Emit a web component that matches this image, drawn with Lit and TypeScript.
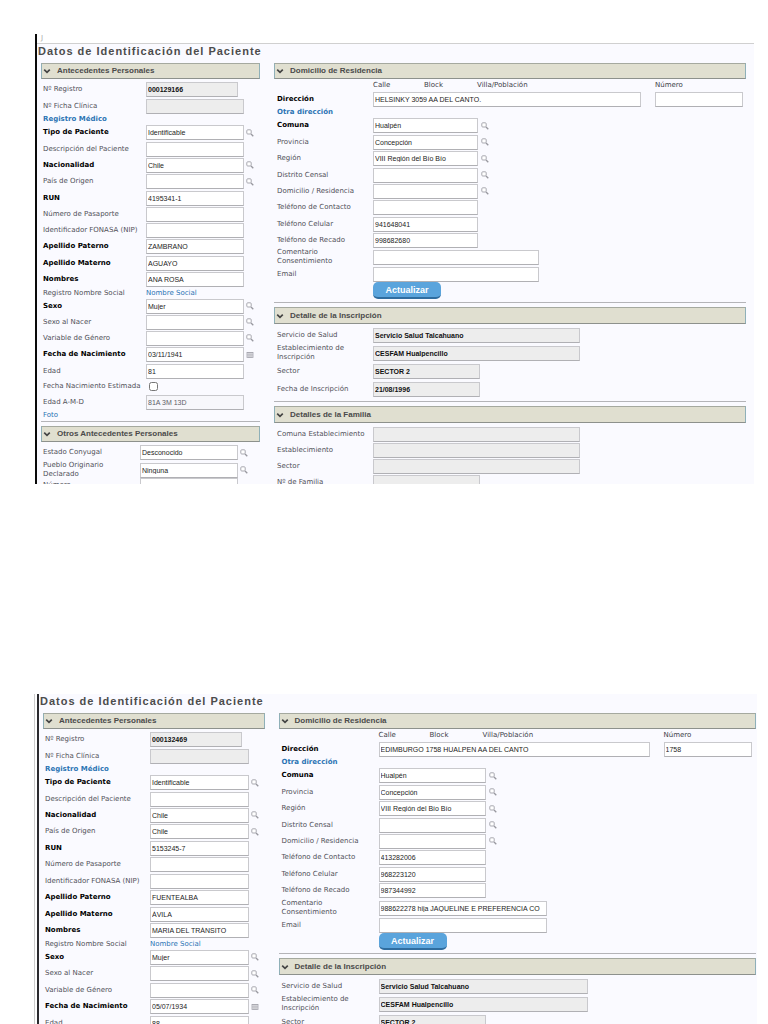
import { LitElement, html, css, svg, nothing } from "lit";
import { customElement, property } from "lit/decorators.js";
import { classMap } from "lit/directives/class-map.js";

type Row = {
  label: string;
  value?: string;
  kind?: "text" | "link" | "linkPair" | "check";
  bold?: boolean;
  icon?: "search" | "calendar";
  locked?: boolean;
  muted?: boolean;
  width?: "code" | "long" | "wide" | "mid";
  size?: string;
};

type Patient = {
  full: boolean;
  registro: string;
  origen: string;
  run: string;
  paterno: string;
  materno: string;
  nombres: string;
  nacimiento: string;
  edad: string;
  amd?: string;
  calle: string;
  numero: string;
  contacto: string;
  celular: string;
  recado: string;
  comentario: string;
};

const patients: Patient[] = [
  {
    full: true, registro: "000129166", origen: "", run: "4195341-1", paterno: "ZAMBRANO", materno: "AGUAYO",
    nombres: "ANA ROSA", nacimiento: "03/11/1941", edad: "81", amd: "81A 3M 13D",
    calle: "HELSINKY 3059 AA DEL CANTO.", numero: "", contacto: "", celular: "941648041",
    recado: "998682680", comentario: "",
  },
  {
    full: false, registro: "000132469", origen: "Chile", run: "5153245-7", paterno: "FUENTEALBA", materno: "ÁVILA",
    nombres: "MARIA DEL TRÁNSITO", nacimiento: "05/07/1934", edad: "88",
    calle: "EDIMBURGO 1758 HUALPEN AA DEL CANTO", numero: "1758", contacto: "413282006",
    celular: "968223120", recado: "987344992", comentario: "988622278 hija JAQUELINE E PREFERENCIA CO",
  },
];

const searchIcon = svg`<svg class="glyph" viewBox="0 0 8 8" aria-hidden="true">
  <rect x=".8" y=".8" width="4.4" height="4.2" rx="1" fill="#fff" stroke="#a8a8b0"/>
  <path d="M5 5 7.3 7.3" stroke="#98989f" stroke-width="1.3"/></svg>`;

const calendarIcon = svg`<svg class="glyph" viewBox="0 0 8 8" aria-hidden="true">
  <path d="M1 1.5h6" stroke="#96969e"/>
  <rect x="1" y="1.5" width="6" height="5" fill="#f4f4f8" stroke="#a4a4ac" stroke-width=".8"/>
  <path d="M1 3.2h6M1 4.9h6M3 2v5M5 2v5" stroke="#a4a4ac" stroke-width=".6"/></svg>`;

const chevron = svg`<svg class="chev" viewBox="0 0 8 8" aria-hidden="true">
  <path d="M1.2 2.6 4 5.3 6.8 2.6" fill="none" stroke="#444" stroke-width="1.7"/></svg>`;

const wrapping = ["Comentario Consentimiento", "Establecimiento de Inscripción", "Pueblo Originario Declarado"];

@customElement("patient-record")
class PatientRecord extends LitElement {
  @property({ attribute: false }) patient!: Patient;

  static styles = css`
    :host {
      display: block;
      background: #fafaff;
      color: #505058;
      font: 7px/9px "DejaVu Sans", Verdana, sans-serif;
    }
    .clip { height: 100%; overflow: hidden; }
    .scrap {
      height: 10px;
      border-bottom: 1px solid #d0d0d0;
      background: #fff;
      padding-left: 4px;
      color: #aaa;
      box-sizing: border-box;
    }
    h1 {
      margin: 0;
      padding-left: 1px;
      color: #4c4c4c;
      font: bold 11px/15px "Liberation Sans", Arial, sans-serif;
      letter-spacing: 1px;
      white-space: nowrap;
    }
    .columns {
      display: grid;
      grid-template-columns: 219fr 472fr;
      column-gap: 14px;
      margin: 4px var(--edge) 0 4px;
    }
    h2 {
      display: flex;
      align-items: center;
      gap: 6px;
      height: 16px;
      box-sizing: border-box;
      margin: 0;
      padding-left: 1px;
      border: 1px solid #a5a99f;
      border-left-color: #8fb0b8;
      border-right-color: #8fb0b8;
      border-bottom-color: #8d918c;
      background: #e0dfd0;
      color: #4a4a4a;
      font: bold 8px/14px "Liberation Sans", Arial, sans-serif;
      white-space: nowrap;
    }
    .chev { width: 8px; height: 8px; }
    .rows { padding: 2px 0 0 2px; }
    .row {
      display: grid;
      grid-template-columns: var(--label) minmax(0, 1fr);
      align-items: center;
      height: 16px;
    }
    .right { --label: var(--label-right); }
    .right .rows { padding-left: 3px; }
    .plus { height: 17px; }
    .less { height: 15px; }
    .pair { height: 10px; }
    .tall { height: 18px; }
    .label { display: block; }
    .one { white-space: nowrap; }
    .bold { color: #000; font-weight: bold; }
    .control { display: flex; align-items: center; gap: 2px; }
    .right .control { gap: 3px; }
    .right .address { gap: 14px; }
    input { margin: 0; box-sizing: border-box; }
    .box {
      width: var(--field);
      height: 15px;
      padding: 0 1px;
      border: 1px solid #c9c9cd;
      border-bottom-color: #b0b0b4;
      border-radius: 0;
      background: #fff;
      color: #1c1c22;
      font: 7px/12px "Liberation Sans", Arial, sans-serif;
    }
    .right .box { width: var(--field-right); }
    .box.locked { background: #ededed; color: #111; font-weight: bold; }
    .box.muted { background: #f7f7fb; color: #606068; }
    .box.code { width: 92px; }
    .right .box.long { width: var(--long); }
    .right .box.wide { width: var(--wide); }
    .right .box.mid { width: 107px; }
    .right .box.street { width: var(--street); }
    .right .box.number { width: 88px; }
    .tick { width: 9px; height: 9px; margin-left: 3px; }
    .lookup {
      display: block;
      width: 8px;
      height: 8px;
      padding: 0;
      border: 0;
      background: none;
    }
    .glyph { display: block; width: 8px; height: 8px; }
    a { color: #2b74b4; text-decoration: none; }
    .strong { font-weight: bold; }
    .captions {
      display: grid;
      grid-template-columns: 51px 53px calc(var(--street) - 90px) 1fr;
      padding-left: var(--label-right);
      height: 10px;
      color: #404048;
    }
    .update {
      display: block;
      width: 68px;
      height: 17px;
      margin: 0 0 2px var(--label-right);
      padding: 0;
      border: 0;
      border-bottom: 2px solid #2f6d9f;
      border-radius: 5px;
      background: #5aa4dc;
      color: #fff;
      font: bold 9px/14px "Liberation Sans", Arial, sans-serif;
    }
    hr {
      height: 1px;
      margin: 1px 0 4px;
      border: 0;
      background: #b4b4b8;
    }
    .right hr { margin-top: 3px; }
    .right hr ~ h2 { height: 17px; }
    .right hr ~ .rows { padding-top: 3px; }
    .other { --label: 97px; }
  `;

  private field(r: Row, id: string) {
    const box = html`<input
      id=${id}
      type="text"
      .value=${r.value ?? ""}
      ?readonly=${!!(r.locked || r.muted)}
      class=${classMap({ box: true, locked: !!r.locked, muted: !!r.muted, [r.width ?? "normal"]: true })}
    />`;
    const look = r.icon
      ? html`<button class="lookup" type="button" aria-label="Buscar ${r.label}">
          ${r.icon === "search" ? searchIcon : calendarIcon}
        </button>`
      : nothing;
    return html`<div class="control">${box}${look}</div>`;
  }

  private row(r: Row, id: string) {
    const cls = classMap({ row: true, [r.size ?? "base"]: true });
    if (r.kind === "link")
      return html`<div class=${cls}><a class=${classMap({ one: true, strong: !!r.bold })} href="#">${r.label}</a></div>`;
    if (r.kind === "linkPair")
      return html`<div class=${cls}><span class="one">${r.label}</span><a href="#">${r.value}</a></div>`;
    const label = html`<label for=${id} class=${classMap({ label: true, bold: !!r.bold, one: !wrapping.includes(r.label) })}>${r.label}</label>`;
    if (r.kind === "check")
      return html`<div class=${cls}>${label}<input id=${id} class="tick" type="checkbox" /></div>`;
    return html`<div class=${cls}>${label}${this.field(r, id)}</div>`;
  }

  private rows(name: string, list: Row[]) {
    return list.map((r, i) => this.row(r, `${name}${i}`));
  }

  private otherDetails() {
    return html`
      <hr />
      <h2>${chevron}Otros Antecedentes Personales</h2>
      <div class="rows other">
        ${this.rows("otr", [
          { label: "Estado Conyugal", value: "Desconocido", icon: "search", size: "plus" },
          { label: "Pueblo Originario Declarado", value: "Ninguna", icon: "search", size: "plus" },
          { label: "Número", size: "less" },
        ])}
      </div>
    `;
  }

  private family() {
    return html`
      <hr />
      <h2>${chevron}Detalles de la Familia</h2>
      <div class="rows">
        ${this.rows("fam", [
          { label: "Comuna Establecimiento", locked: true, width: "wide" },
          { label: "Establecimiento", locked: true, width: "wide" },
          { label: "Sector", locked: true, width: "wide" },
          { label: "Nº de Familia", locked: true, width: "mid", size: "plus" },
        ])}
      </div>
    `;
  }

  render() {
    const p = this.patient;
    const alt = p.full ? "base" : "plus";
    const closing: Row[] = [
      { label: "Fecha Nacimiento Estimada", kind: "check", size: "less" },
      { label: "Edad A-M-D", value: p.amd, muted: true },
      { label: "Foto", kind: "link", size: "pair" },
    ];
    const enrolment: Row[] = [
      { label: "Fecha de Inscripción", value: "21/08/1996", locked: true, width: "mid", size: "tall" },
    ];
    return html`<div class="clip">
      ${p.full ? html`<div class="scrap">J</div>` : nothing}
      <h1>Datos de Identificación del Paciente</h1>
      <div class="columns">
        <div class="left">
          <h2>${chevron}Antecedentes Personales</h2>
          <div class="rows">
            ${this.rows("per", [
              { label: "Nº Registro", value: p.registro, locked: true, width: "code", size: "plus" },
              { label: "Nº Ficha Clínica", locked: true },
              { label: "Registro Médico", kind: "link", bold: true, size: "pair" },
              { label: "Tipo de Paciente", value: "Identificable", bold: true, icon: "search", size: "plus" },
              { label: "Descripción del Paciente" },
              { label: "Nacionalidad", value: "Chile", bold: true, icon: "search" },
              { label: "País de Origen", value: p.origen, icon: "search", size: "plus" },
              { label: "RUN", value: p.run, bold: true },
              { label: "Número de Pasaporte", size: alt },
              { label: "Identificador FONASA (NIP)" },
              { label: "Apellido Paterno", value: p.paterno, bold: true, size: "plus" },
              { label: "Apellido Materno", value: p.materno, bold: true },
              { label: "Nombres", value: p.nombres, bold: true, size: "plus" },
              { label: "Registro Nombre Social", value: "Nombre Social", kind: "linkPair", size: "pair" },
              { label: "Sexo", value: "Mujer", bold: true, icon: "search" },
              { label: "Sexo al Nacer", icon: "search", size: alt },
              { label: "Variable de Género", icon: "search" },
              { label: "Fecha de Nacimiento", value: p.nacimiento, bold: true, icon: "calendar", size: "plus" },
              { label: "Edad", value: p.edad },
              ...(p.full ? closing : []),
            ])}
          </div>
          ${p.full ? this.otherDetails() : nothing}
        </div>
        <div class="right">
          <h2>${chevron}Domicilio de Residencia</h2>
          <div class="rows">
            <div class="captions"><span>Calle</span><span>Block</span><span>Villa/Población</span><label for="numero">Número</label></div>
            <div class="row">
              <label class="label bold" for="calle">Dirección</label>
              <div class="control address">
                <input id="calle" class="box street" type="text" .value=${p.calle} />
                <input id="numero" class="box number" type="text" .value=${p.numero} />
              </div>
            </div>
            ${this.rows("dom", [
              { label: "Otra dirección", kind: "link", bold: true, size: "pair" },
              { label: "Comuna", value: "Hualpén", bold: true, icon: "search", size: "plus" },
              { label: "Provincia", value: "Concepción", icon: "search" },
              { label: "Región", value: "VIII Región del Bío Bío", icon: "search", size: "plus" },
              { label: "Distrito Censal", icon: "search" },
              { label: "Domicilio / Residencia", icon: "search" },
              { label: "Teléfono de Contacto", value: p.contacto, size: "plus" },
              { label: "Teléfono Celular", value: p.celular },
              { label: "Teléfono de Recado", value: p.recado, size: alt },
              { label: "Comentario Consentimiento", value: p.comentario, width: "long", size: "tall" },
              { label: "Email", width: "long" },
            ])}
            <button class="update" type="button">Actualizar</button>
          </div>
          <hr />
          <h2>${chevron}Detalle de la Inscripción</h2>
          <div class="rows">
            ${this.rows("ins", [
              { label: "Servicio de Salud", value: "Servicio Salud Talcahuano", locked: true, width: "wide", size: "plus" },
              { label: "Establecimiento de Inscripción", value: "CESFAM Hualpencillo", locked: true, width: "wide", size: "tall" },
              { label: "Sector", value: "SECTOR 2", locked: true, width: "mid", size: "tall" },
              ...(p.full ? enrolment : []),
            ])}
          </div>
          ${p.full ? this.family() : nothing}
        </div>
      </div>
    </div>`;
  }
}

@customElement("app-root")
class AppRoot extends LitElement {
  static styles = css`
    :host {
      display: flex;
      flex-direction: column;
      gap: 210px;
      height: 100vh;
      box-sizing: border-box;
      overflow: hidden;
      padding: 34px 11px 0 35px;
      background: #fff;
    }
    .first {
      flex: none;
      height: 450px;
      margin-right: 3px;
      border-left: 2px solid #0a0a0a;
      --edge: 8px;
      --label: 103px;
      --label-right: 96px;
      --field: 98px;
      --field-right: 105px;
      --long: 166px;
      --wide: 207px;
      --street: 268px;
    }
    .second {
      flex: 1;
      min-height: 0;
      margin-left: 2px;
      border-left: 2px solid #2a2a2e;
      box-shadow: -2px 0 0 #fff, -3px 0 0 #ccc;
      --edge: 1px;
      --label: 105px;
      --label-right: 97px;
      --field: 99px;
      --field-right: 107px;
      --long: 168px;
      --wide: 209px;
      --street: 271px;
    }
  `;

  render() {
    return html`
      <patient-record class="first" .patient=${patients[0]}></patient-record>
      <patient-record class="second" .patient=${patients[1]}></patient-record>
    `;
  }
}
